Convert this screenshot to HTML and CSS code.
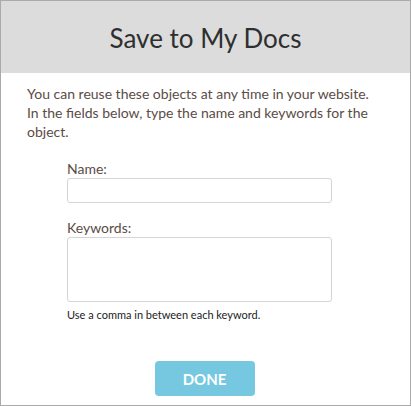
FILE: index.html
```html
<!DOCTYPE html>
<html lang="en">
<head>
    <meta charset="UTF-8">
    <title>Save to My Docs</title>
    <link rel="stylesheet" href="styles.css">
</head>
<body>
    <div class="dialog">
        <div class="dialog-header">
            <h1>Save to My Docs</h1>
        </div>
        <div class="dialog-body">
            <p class="intro">You can reuse these objects at any time in your website. In the fields below, type the name and keywords for the object.</p>
            <form class="doc-form">
                <label class="field-label" for="doc-name">Name:</label>
                <input type="text" id="doc-name" class="field-input">
                <label class="field-label" for="doc-keywords">Keywords:</label>
                <textarea id="doc-keywords" class="field-area"></textarea>
                <div class="field-hint">Use a comma in between each keyword.</div>
            </form>
            <div class="actions">
                <button type="button" class="done-btn">DONE</button>
            </div>
        </div>
    </div>
</body>
</html>
```

FILE: styles.css
```css
/* Reset */
* {
    margin: 0;
    padding: 0;
    box-sizing: border-box;
}

body {
    font-family: Lato, "Open Sans", sans-serif;
    background-color: #fff;
}

/* Dialog frame */
.dialog {
    width: 411px;
    height: 406px;
    border: 1px solid #aaa;
    background-color: #fff;
}

.dialog-header {
    height: 72px;
    background-color: #dcdcdc;
    display: flex;
    align-items: center;
    justify-content: center;
}

.dialog-header h1 {
    font-size: 26px;
    font-weight: normal;
    color: #2f2f2f;
    padding-top: 2px;
}

.dialog-body {
    padding: 11px 28px 0 26px;
}

.intro {
    font-size: 14px;
    line-height: 19px;
    color: #5a4c46;
}

/* Form */
.doc-form {
    display: flex;
    flex-direction: column;
    padding: 0 40px;
    margin-top: 20px;
}

.field-label {
    font-size: 14px;
    color: #5a4c46;
    line-height: 16px;
    margin-bottom: 1px;
}

.field-input,
.field-area {
    width: 265px;
    border: 1px solid #d4d4d4;
    border-radius: 3px;
    background-color: #fff;
    font-family: inherit;
    resize: none;
}

.field-input {
    height: 25px;
    margin-bottom: 17px;
}

.field-area {
    height: 65px;
}

.field-hint {
    font-size: 11px;
    line-height: 14px;
    color: #222;
    margin-top: 6px;
}

/* Button */
.actions {
    display: flex;
    justify-content: center;
    margin-top: 39px;
}

.done-btn {
    width: 100px;
    height: 35px;
    background-color: #76c8e1;
    color: #fff;
    border: none;
    border-radius: 4px;
    font-family: inherit;
    font-size: 15px;
    font-weight: bold;
    cursor: pointer;
}
```
